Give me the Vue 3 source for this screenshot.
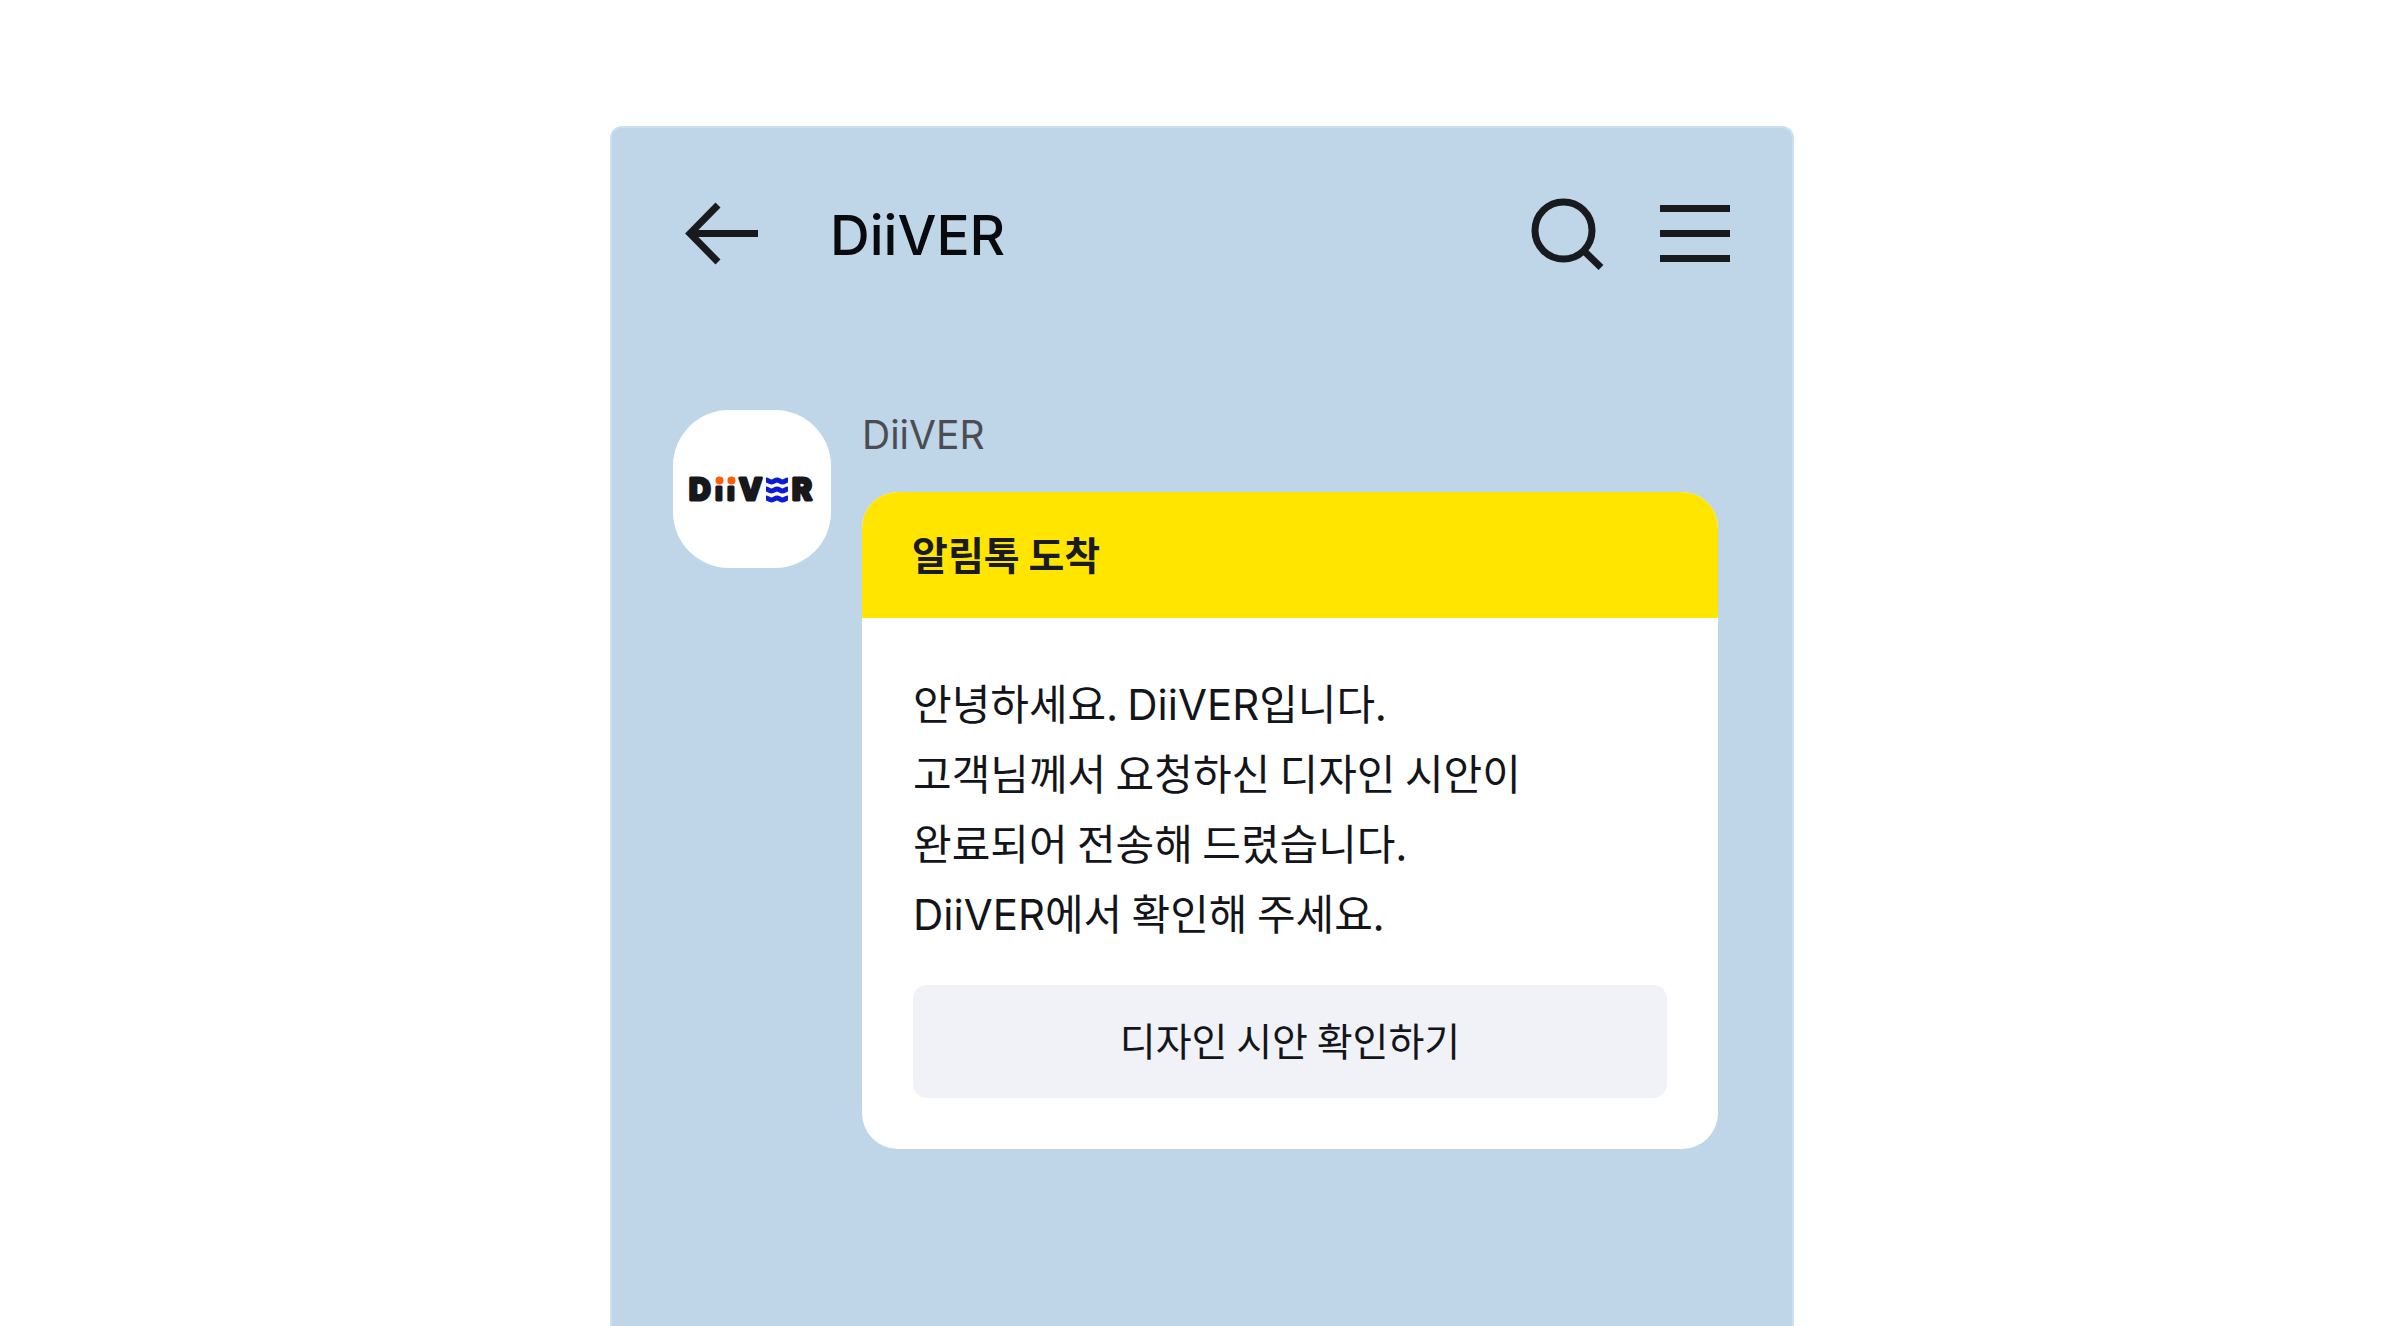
<script setup>
const brand = 'DiiVER'
const lines = [
  ['안녕하세요. ', brand, '입니다.'],
  ['고객님께서 요청하신 디자인 시안이'],
  ['완료되어 전송해 드렸습니다.'],
  [brand, '에서 확인해 주세요.'],
]
const waveRows = [480, 489, 498]
</script>

<template>
  <div class="page">
    <main class="phone">
      <header class="topbar">
        <button class="icon-button" type="button" aria-label="뒤로">
          <svg width="76" height="76" viewBox="0 0 76 76">
            <path d="M74 37.500H7M34 9L6 37.500L34 66" />
          </svg>
        </button>
        <h1 class="title">{{ brand }}</h1>
        <div class="actions">
          <button class="icon-button" type="button" aria-label="검색">
            <svg width="76" height="76" viewBox="0 0 76 76">
              <circle cx="33.500" cy="34.500" r="28.500" />
              <path d="M53 54L71 71.500" />
            </svg>
          </button>
          <button class="icon-button" type="button" aria-label="메뉴">
            <svg width="76" height="76" viewBox="0 0 76 76">
              <path d="M4 12.500H74M4 37.500H74M4 62.500H74" />
            </svg>
          </button>
        </div>
      </header>

      <section class="message">
        <div class="avatar">
          <svg class="logo" width="158" height="158" viewBox="673 410 158 158" role="img" aria-label="DiiVER">
            <text class="logo-text" y="500">
              <tspan x="689">D</tspan>
              <tspan class="logo-stem" x="715.500 727.500">ıı</tspan>
              <tspan x="739 792">VR</tspan>
            </text>
            <circle class="logo-dot" cx="719.500" cy="480.500" r="4" />
            <circle class="logo-dot" cx="731.500" cy="480.500" r="4" />
            <path
              v-for="y in waveRows"
              :key="y"
              class="logo-wave"
              :d="`M766 ${y}c2 0 3 2 5.500 2s3.500 -2 5.500 -2s3.500 2 5.500 2s3.500 -2 5.500 -2`"
            />
          </svg>
        </div>
        <div class="content">
          <p class="sender">{{ brand }}</p>
          <article class="card">
            <h2 class="card-head">알림톡 도착</h2>
            <div class="card-body">
              <p v-for="(parts, i) in lines" :key="i" class="line">
                <span v-for="part in parts" :key="part" :class="{ latin: part === brand }">{{ part }}</span>
              </p>
              <button class="confirm" type="button">디자인 시안 확인하기</button>
            </div>
          </article>
        </div>
      </section>
    </main>
  </div>
</template>

<style>
body {
  margin: 0;
  background: #fff;
}
</style>

<style scoped>
.page {
  display: flex;
  justify-content: center;
  box-sizing: border-box;
  min-height: 100vh;
  padding: 126px 24px 0 28px;
  font-family: "Noto Sans CJK KR", sans-serif;
  color: #14151a;
}
.phone {
  box-sizing: border-box;
  width: 100%;
  max-width: 1184px;
  border: 2px solid #cadff2;
  border-bottom: 0;
  border-radius: 12px 12px 0 0;
  background: #bfd5e8;
}
.topbar {
  display: flex;
  align-items: center;
  padding: 68px 60px 0 72px;
}
.icon-button {
  display: block;
  padding: 0;
  border: 0;
  background: none;
  cursor: pointer;
}
.icon-button svg {
  display: block;
  fill: none;
  stroke: #191a1d;
  stroke-width: 7;
}
.title,
.sender,
.latin {
  font-family: Inter, sans-serif;
}
.title {
  margin: 0 0 0 70px;
  padding-top: 2px;
  font-size: 55px;
  line-height: 74px;
  font-weight: 500;
  color: #090a0e;
}
.actions {
  display: flex;
  gap: 50px;
  margin-left: auto;
}
.message {
  display: flex;
  align-items: flex-start;
  gap: 31px;
  padding: 138px 74px 60px 61px;
}
.avatar {
  flex: none;
  border-radius: 56px;
  background: #fff;
}
.logo {
  display: block;
}
.logo-text {
  font-family: Inter, sans-serif;
  font-size: 30px;
  font-weight: 800;
  fill: #17181c;
  stroke: #17181c;
  stroke-width: 3;
  stroke-linejoin: round;
}
.logo-stem {
  font-size: 24px;
}
.logo-dot {
  fill: #ff5c0a;
}
.logo-wave {
  fill: none;
  stroke: #0d1bd6;
  stroke-width: 5;
}
.content {
  flex: 1;
  min-width: 0;
}
.sender {
  margin: 0 0 32px;
  font-size: 39px;
  line-height: 50px;
  color: #4b4d52;
}
.card {
  overflow: hidden;
  border-radius: 36px;
  background: #fff;
}
.card-head {
  margin: 0;
  padding: 0 50px 4px;
  background: #ffe500;
  font-size: 39px;
  line-height: 122px;
  font-weight: 700;
  color: #1a1b1f;
}
.card-body {
  padding: 49px 51px 51px;
}
.line {
  margin: 0;
  font-size: 42px;
  line-height: 70px;
  white-space: pre-wrap;
}
.latin {
  line-height: 1;
}
.confirm {
  display: block;
  width: 100%;
  height: 113px;
  margin-top: 38px;
  padding: 0 0 6px;
  border: 0;
  border-radius: 14px;
  background: #f0f2f8;
  font-family: inherit;
  font-size: 39px;
  color: inherit;
  cursor: pointer;
}
</style>
